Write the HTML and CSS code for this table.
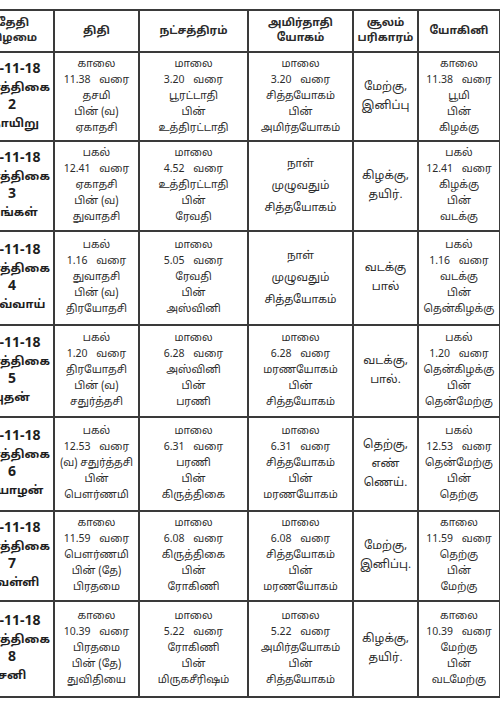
FILE: index.html
```html
<!DOCTYPE html>
<html lang="ta">
<head>
<meta charset="utf-8">
<link rel="stylesheet" href="styles.css">
</head>
<body>
<div class="page">
<table class="cal">
<colgroup>
<col class="c1"><col class="c2"><col class="c3"><col class="c4"><col class="c5"><col class="c6">
</colgroup>
<thead>
<tr>
<th class="dh">தேதி<br>கிழமை</th>
<th>திதி</th>
<th>நட்சத்திரம்</th>
<th>அமிர்தாதி<br>யோகம்</th>
<th>சூலம்<br>பரிகாரம்</th>
<th>யோகினி</th>
</tr>
</thead>
<tbody>
<tr class="r1">
<td class="d"><span class="dt">18-11-18</span><br>கார்த்திகை<br><span class="dt">2</span><br>ஞாயிறு</td>
<td>காலை<br><span class="j">11.38 வரை</span><br>தசமி<br>பின் (வ)<br>ஏகாதசி</td>
<td>மாலை<br><span class="j">3.20 வரை</span><br>பூரட்டாதி<br>பின்<br>உத்திரட்டாதி</td>
<td>மாலை<br><span class="j">3.20 வரை</span><br>சித்தயோகம்<br>பின்<br>அமிர்தயோகம்</td>
<td class="s">மேற்கு,<br>இனிப்பு</td>
<td>காலை<br><span class="j">11.38 வரை</span><br>பூமி<br>பின்<br>கிழக்கு</td>
</tr>
<tr class="r2">
<td class="d"><span class="dt">19-11-18</span><br>கார்த்திகை<br><span class="dt">3</span><br>திங்கள்</td>
<td>பகல்<br><span class="j">12.41 வரை</span><br>ஏகாதசி<br>பின் (வ)<br>துவாதசி</td>
<td>மாலை<br><span class="j">4.52 வரை</span><br>உத்திரட்டாதி<br>பின்<br>ரேவதி</td>
<td class="w">நாள்<br>முழுவதும்<br>சித்தயோகம்</td>
<td class="s">கிழக்கு,<br>தயிர்.</td>
<td>பகல்<br><span class="j">12.41 வரை</span><br>கிழக்கு<br>பின்<br>வடக்கு</td>
</tr>
<tr class="r3">
<td class="d"><span class="dt">20-11-18</span><br>கார்த்திகை<br><span class="dt">4</span><br>செவ்வாய்</td>
<td>பகல்<br><span class="j">1.16 வரை</span><br>துவாதசி<br>பின் (வ)<br>திரயோதசி</td>
<td>மாலை<br><span class="j">5.05 வரை</span><br>ரேவதி<br>பின்<br>அஸ்வினி</td>
<td class="w">நாள்<br>முழுவதும்<br>சித்தயோகம்</td>
<td class="s">வடக்கு<br>பால்</td>
<td>பகல்<br><span class="j">1.16 வரை</span><br>வடக்கு<br>பின்<br>தென்கிழக்கு</td>
</tr>
<tr class="r4">
<td class="d"><span class="dt">21-11-18</span><br>கார்த்திகை<br><span class="dt">5</span><br>புதன்</td>
<td>பகல்<br><span class="j">1.20 வரை</span><br>திரயோதசி<br>பின் (வ)<br>சதுர்த்தசி</td>
<td>மாலை<br><span class="j">6.28 வரை</span><br>அஸ்வினி<br>பின்<br>பரணி</td>
<td>மாலை<br><span class="j">6.28 வரை</span><br>மரணயோகம்<br>பின்<br>சித்தயோகம்</td>
<td class="s">வடக்கு,<br>பால்.</td>
<td>பகல்<br><span class="j">1.20 வரை</span><br>தென்கிழக்கு<br>பின்<br>தென்மேற்கு</td>
</tr>
<tr class="r5">
<td class="d"><span class="dt">22-11-18</span><br>கார்த்திகை<br><span class="dt">6</span><br>வியாழன்</td>
<td>பகல்<br><span class="j">12.53 வரை</span><br>(வ) சதுர்த்தசி<br>பின்<br>பௌர்ணமி</td>
<td>மாலை<br><span class="j">6.31 வரை</span><br>பரணி<br>பின்<br>கிருத்திகை</td>
<td>மாலை<br><span class="j">6.31 வரை</span><br>சித்தயோகம்<br>பின்<br>மரணயோகம்</td>
<td class="s">தெற்கு,<br>எண்<br>ணெய்.</td>
<td>பகல்<br><span class="j">12.53 வரை</span><br>தென்மேற்கு<br>பின்<br>தெற்கு</td>
</tr>
<tr class="r6">
<td class="d"><span class="dt">23-11-18</span><br>கார்த்திகை<br><span class="dt">7</span><br>வெள்ளி</td>
<td>காலை<br><span class="j">11.59 வரை</span><br>பௌர்ணமி<br>பின் (தே)<br>பிரதமை</td>
<td>மாலை<br><span class="j">6.08 வரை</span><br>கிருத்திகை<br>பின்<br>ரோகிணி</td>
<td>மாலை<br><span class="j">6.08 வரை</span><br>சித்தயோகம்<br>பின்<br>மரணயோகம்</td>
<td class="s">மேற்கு,<br>இனிப்பு.</td>
<td>காலை<br><span class="j">11.59 வரை</span><br>தெற்கு<br>பின்<br>மேற்கு</td>
</tr>
<tr class="r7">
<td class="d"><span class="dt">24-11-18</span><br>கார்த்திகை<br><span class="dt">8</span><br>சனி</td>
<td>காலை<br><span class="j">10.39 வரை</span><br>பிரதமை<br>பின் (தே)<br>துவிதியை</td>
<td>மாலை<br><span class="j">5.22 வரை</span><br>ரோகிணி<br>பின்<br>மிருகசீரிஷம்</td>
<td>மாலை<br><span class="j">5.22 வரை</span><br>அமிர்தயோகம்<br>பின்<br>சித்தயோகம்</td>
<td class="s">கிழக்கு,<br>தயிர்.</td>
<td>காலை<br><span class="j">10.39 வரை</span><br>மேற்கு<br>பின்<br>வடமேற்கு</td>
</tr>
</tbody>
</table>
</div>
</body>
</html>
```
FILE: styles.css
```css
html, body {
  margin: 0;
  padding: 0;
  background: #ffffff;
}
.page {
  width: 500px;
  height: 702px;
  overflow: hidden;
  padding-top: 9px;
  box-sizing: border-box;
}
.cal {
  margin-left: -31px;
  border-collapse: collapse;
  table-layout: fixed;
  width: 530px;
  font-family: "Noto Sans Tamil", "Lohit Tamil", "Noto Sans", sans-serif;
  color: #2b2b2b;
}
.c1 { width: 84px; }
.c2 { width: 85px; }
.c3 { width: 109px; }
.c4 { width: 105px; }
.c5 { width: 65px; }
.c6 { width: 82px; }
.cal th, .cal td {
  border: 2px solid #3a3a3a;
  text-align: center;
  vertical-align: middle;
  padding: 0 2px;
  overflow: hidden;
  white-space: nowrap;
}
.cal th {
  height: 40px;
  font-size: 11px;
  line-height: 15px;
  font-weight: 700;
}
.cal th.dh {
  padding-left: 4px;
}
.cal td {
  font-size: 10.5px;
  line-height: 16px;
}
.cal td.d {
  font-size: 11.5px;
  line-height: 18px;
  font-weight: 700;
  color: #1e1e1e;
}
.cal td.d .dt {
  font-size: 14px;
}
.cal td.s {
  font-size: 11.5px;
  line-height: 19px;
}
.cal td.w {
  line-height: 22px;
  font-size: 11px;
}
.j {
  word-spacing: 6px;
}
.r1 td { height: 87px; }
.r2 td { height: 88px; }
.r3 td { height: 92px; }
.r4 td { height: 90px; }
.r5 td { height: 92px; }
.r6 td { height: 88px; }
.r7 td { height: 94px; }
```
